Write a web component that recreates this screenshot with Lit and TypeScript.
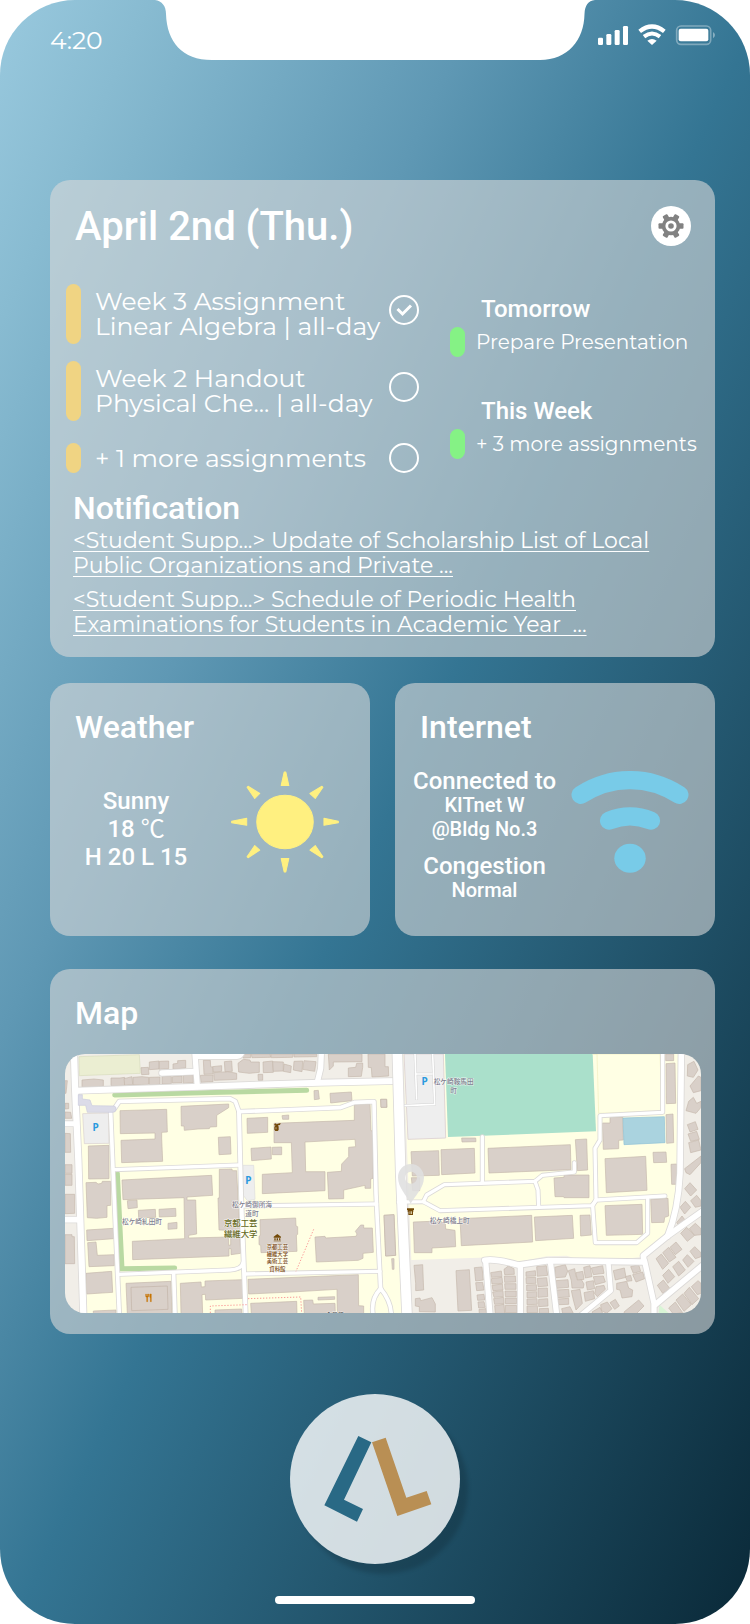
import { LitElement, html, svg, css } from "lit";
import { customElement, property, state } from "lit/decorators.js";

interface Road {
  d: string;
  w: number;
}

interface Label {
  x: number;
  y: number;
  size: number;
  fill: string;
  text: string;
}

const WEST_ROADS: Road[] = [
  { d: "M102 282L105 380L115 600L130 1062", w: 19 },
  { d: "M108 392L480 380L840 368L1070 363", w: 18 },
  { d: "M465 282L472 380", w: 16 },
  { d: "M472 287H590Q600 286 603 278", w: 20 },
  { d: "M366 339L465 335", w: 17 },
  { d: "M844 278L842 325L832 366", w: 16 },
  { d: "M70 491H108", w: 15 },
  { d: "M70 779H118", w: 17 },
  { d: "M222 448L238 424L570 416L586 424L597 455L900 443L945 427L1002 425L1008 700L1022 990", w: 11 },
  { d: "M212 458L222 700L238 1062", w: 11 },
  { d: "M222 629L600 615", w: 10 },
  { d: "M597 455L603 700L617 1062", w: 12 },
  { d: "M606 738L1010 732", w: 10 },
  { d: "M238 943L570 930Q605 928 609 908", w: 10 },
  { d: "M615 942L1020 934", w: 10 },
  { d: "M401 943L405 1062", w: 11 },
  { d: "M1022 986Q992 1016 999 1062", w: 11 },
  { d: "M1022 986Q1052 1022 1054 1062", w: 11 },
];

const EAST_ROADS: Road[] = [
  { d: "M52 278L62 640L81 1064", w: 29 },
  { d: "M55 726L130 725L140 705L193 674L465 664L487 646L583 636V608", w: 10 },
  { d: "M130 725L180 752L635 737L650 720L855 708", w: 10 },
  { d: "M307 530V668", w: 10 },
  { d: "M465 664L474 690L476 742", w: 10 },
  { d: "M848 278V457L660 467V540L645 565L648 718L638 738L646 848H770L803 820V716", w: 10 },
  { d: "M904 278L900 640Q895 750 863 828", w: 17 },
  { d: "M314 901Q345 895 415 915L505 902L792 906L790 887L865 826L970 752", w: 17 },
  { d: "M317 902L330 1064", w: 16 },
  { d: "M421 915V1064", w: 16 },
  { d: "M511 904L530 1064", w: 16 },
  { d: "M685 908L692 992L600 1068", w: 14 },
  { d: "M794 904L822 1030V1064", w: 16 },
  { d: "M826 1034L970 914", w: 17 },
];

const WEST_BUILDINGS = [
  "240,452 380,448 382,516 365,517 365,534 368,604 245,608 243,541 345,537 345,519 241,521",
  "423,439 566,432 566,443 530,466 530,500 510,501 508,506 474,507 433,511 432,498 424,498",
  "535,532 571,530 573,582 537,584",
  "621,475 683,472 683,517 622,520",
  "633,565 693,561 694,597 635,602",
  "697,562 725,561 725,584 697,584",
  "726,467 746,465 746,478 728,478",
  "702,490 943,481 943,434 990,432 993,512 999,513 999,655 992,657 992,685 975,685 975,676 911,690 911,716 866,717 862,637 904,634 905,612 926,590 926,562 947,560 945,538 795,546 797,635 855,635 855,692 667,701 667,643 757,638 754,548 702,548",
  "246,660 515,646 518,706 441,711 441,720 467,720 470,822 446,826 446,834 566,831 566,856 572,855 572,811 537,810 534,714 538,714 538,628 576,627 577,632 590,632 602,880 573,884 573,866 567,866 567,888 278,899 277,844 434,836 432,713 249,719",
  "262,722 291,720 292,743 264,746",
  "295,751 346,748 347,772 296,773",
  "357,748 407,745 408,769 358,771",
  "384,790 411,787 411,806 384,808",
  "145,558 207,556 207,656 146,657",
  "138,668 168,667 174,672 185,670 187,664 212,664 212,736 201,737 201,772 170,775 142,773",
  "140,810 220,805 221,836 141,842",
  "143,848 168,846 172,886 223,884 223,917 147,920",
  "138,940 215,934 218,997 140,1002",
  "160,1053 228,1050 228,1062 160,1062",
  "258,970 393,964 396,1062 262,1062",
  "421,970 483,966 484,981 495,980 495,963 607,959 609,1015 497,1020 496,1003 486,1004 488,1062 423,1062",
  "525,1050 605,1047 606,1062 525,1062",
  "624,958 955,944 956,1037 971,1038 971,1062 892,1062 891,988 755,996 626,1002",
  "632,1030 770,1024 771,1062 634,1062",
  "791,1021 818,1020 820,1032 885,1030 886,1062 793,1062",
  "834,1012 884,1010 884,1018 834,1020",
  "660,779 767,774 768,798 773,800 773,823 769,825 771,874 663,878 662,856 657,854 657,829 661,826",
  "825,831 855,829 857,834 948,829 951,822 946,814 962,795 971,795 971,804 997,804 1000,877 969,880 969,895 955,901 829,906",
  "1032,766 1062,764 1067,886 1037,888",
  "1055,896 1062,896 1062,928 1057,928",
  "822,392 835,391 838,417 823,419",
  "870,400 934,396 936,422 872,429",
  "1022,418 1040,418 1041,442 1023,442",
  "126,360 162,357 190,360 190,379 126,381",
  "213,354 240,354 254,352 254,376 213,377",
  "252,356 276,350 278,374 254,376",
  "279,352 306,350 326,352 326,373 279,374",
  "328,352 360,351 360,373 328,374",
  "366,350 394,349 394,371 366,372",
  "397,350 426,348 426,368 397,369",
  "430,347 460,345 460,368 430,370",
  "303,323 325,322 327,343 305,344",
  "328,306 357,303 357,327 328,329",
  "358,304 386,303 386,326 358,328",
  "399,312 413,310 413,302 437,301 437,324 399,327",
  "481,346 519,345 519,365 483,367",
  "490,301 511,301 512,320 520,322 519,342 492,343",
  "521,338 563,335 590,340 590,358 523,361",
  "518,320 545,317 545,334 520,336",
  "553,305 575,303 577,334 555,335",
  "594,310 610,298 630,300 632,306 658,306 658,337 628,340 596,336",
  "606,282 632,282 632,293 610,294",
  "634,282 690,282 692,292 636,293",
  "692,282 760,282 758,292 694,293",
  "762,282 830,282 830,290 762,291",
  "669,306 698,303 700,337 670,338",
  "698,305 730,306 730,333 700,334",
  "732,312 754,318 752,338 730,334",
  "654,343 668,343 668,361 655,361",
  "762,304 788,303 786,335 760,330",
  "792,302 828,305 824,334 788,328",
  "865,282 966,282 966,305 880,306 880,318 868,330",
  "925,324 947,322 950,310 968,309 968,322 964,349 925,350",
  "984,282 1035,282 1035,320 1045,320 1046,348 996,351 994,323 985,322",
  "75,362 82,362 78,400 75,400",
  "75,430 86,430 86,446 75,447",
  "75,456 92,457 95,475 75,475",
  "75,520 91,521 92,577 75,577",
  "75,614 96,614 96,640 75,640",
  "75,643 96,643 96,676 75,676",
  "75,703 104,703 104,760 75,761",
  "75,824 96,824 96,830 103,830 104,911 75,911",
];

const EAST_BUILDINGS = [
  "93,575 176,572 178,646 97,648",
  "183,569 283,565 285,639 185,644",
  "94,653 119,653 119,692 98,692",
  "245,534 287,534 288,545 246,546",
  "324,565 571,554 573,629 327,639",
  "586,539 620,537 623,630 592,632",
  "522,654 552,652 552,645 627,645 627,713 552,713 551,710 525,710",
  "667,489 690,489 690,472 728,471 730,540 716,541 716,566 670,568",
  "675,596 797,589 801,691 679,698",
  "675,737 786,733 788,823 679,826",
  "819,577 858,576 860,607 821,608",
  "857,282 881,282 881,302 857,302",
  "858,311 885,309 887,430 859,431",
  "858,464 879,462 881,548 860,550",
  "873,613 890,612 890,673 875,673",
  "812,718 864,715 866,768 854,772 852,787 815,788",
  "100,786 180,783 196,792 197,807 225,811 227,860 156,864 156,878 103,878",
  "240,776 455,766 458,846 244,857",
  "463,771 577,766 581,835 467,842",
  "600,766 630,765 634,825 602,828",
  "12,766 42,764 47,886 17,888",
  "2,418 20,418 20,442 3,442",
  "102,916 128,914 131,990 107,992 107,970",
  "228,932 268,929 275,1051 234,1053",
  "106,1016 120,1014 122,1022 156,1013 166,1032 166,1056 118,1055 118,1040 106,1038",
  "283,923 306,921 310,960 287,963",
  "287,968 308,967 312,990 290,992",
  "291,1005 312,1003 314,1020 293,1021",
  "294,1026 312,1025 316,1042 296,1044",
  "297,1048 318,1046 320,1062 298,1062",
  "332,938 364,933 366,950 334,952",
  "334,956 366,952 368,970 336,972",
  "336,976 367,972 369,990 339,992",
  "338,996 369,992 370,1010 342,1012",
  "341,1016 371,1012 372,1031 344,1033",
  "344,1037 372,1033 374,1060 346,1060",
  "372,928 385,918 402,926 403,943 374,944",
  "373,948 406,948 407,966 374,967",
  "374,971 408,971 408,988 375,988",
  "375,993 409,993 409,1010 376,1010",
  "376,1014 410,1014 410,1031 376,1031",
  "376,1036 410,1036 411,1058 376,1058",
  "438,936 466,932 467,948 438,949",
  "438,953 467,952 468,970 439,971",
  "440,975 469,974 470,991 440,992",
  "441,996 470,995 470,1012 441,1013",
  "441,1017 471,1016 472,1033 441,1034",
  "441,1038 472,1037 473,1058 441,1058",
  "470,920 499,917 503,946 472,949",
  "472,955 500,953 503,978 474,980",
  "474,985 502,984 503,1010 474,1012",
  "476,1018 503,1016 504,1038 476,1040",
  "478,1046 505,1045 506,1060 478,1060",
  "524,922 556,914 563,934 556,951 527,953",
  "528,962 564,959 566,982 530,985",
  "530,990 566,988 568,1011 532,1013",
  "534,1017 566,1015 566,1033 536,1034",
  "545,1046 570,1040 580,1060 548,1060",
  "565,932 584,926 588,950 600,952 612,972 610,984 576,984 574,962",
  "574,992 600,988 607,1030 588,1050 580,1020",
  "588,938 608,934 612,958 592,960",
  "611,922 630,917 636,950 616,954",
  "634,924 668,917 672,940 640,944",
  "640,950 670,948 676,966 646,974",
  "618,966 640,962 644,986 622,990",
  "648,980 672,976 676,988 652,1010 644,1000",
  "612,998 640,992 644,1016 616,1024",
  "700,932 733,924 738,952 706,960",
  "710,970 740,964 746,984 758,990 756,1010 726,1014 720,990 710,988",
  "752,920 776,914 782,934 760,940",
  "758,944 788,936 794,956 768,966",
  "736,950 752,946 756,962 742,964",
  "690,1028 706,1018 718,1038 704,1048",
  "662,1034 682,1026 696,1046 680,1060 664,1052",
  "636,1056 660,1042 668,1060 640,1062",
  "732,1056 776,1020 792,1038 768,1062 734,1062",
  "923,314 942,304 954,330 940,352 922,348",
  "930,378 955,348 963,352 963,392 940,398",
  "926,424 940,412 950,430 963,424 963,442 948,460 918,452",
  "922,494 946,485 954,508 930,516",
  "924,522 950,514 958,538 932,544",
  "926,548 956,540 963,570 932,578",
  "914,626 963,588 963,608 930,644 918,638",
  "914,686 930,668 950,690 932,708",
  "932,722 950,706 963,722 963,738 946,742",
  "900,742 916,724 932,742 914,762",
  "890,788 906,768 918,784 900,800",
  "902,820 920,802 944,826 922,844",
  "928,806 946,790 963,806 963,824 944,826",
  "828,896 844,882 866,910 848,928",
  "848,878 866,862 888,892 868,906",
  "870,862 888,846 906,868 886,884",
  "848,946 866,928 884,950 864,970",
  "878,920 896,904 916,930 896,948",
  "908,900 922,884 942,904 924,922",
  "930,874 944,860 963,878 963,890 946,896",
  "832,976 850,960 870,986 848,1000",
  "866,1044 886,1026 908,1058 880,1062",
  "888,1020 908,1002 934,1034 912,1054",
  "912,1000 928,982 956,1016 936,1034",
  "934,980 954,962 963,970 963,1000 952,1004",
];

const LABELS: Label[] = [
  { x: 306, y: 792, size: 20, fill: "#80808f", text: "松ケ崎糺田町" },
  { x: 636, y: 741, size: 20, fill: "#80808f", text: "松ケ崎御所海" },
  { x: 636, y: 769, size: 20, fill: "#80808f", text: "道町" },
  { x: 602, y: 798, size: 25, fill: "#666a1c", text: "京都工芸" },
  { x: 602, y: 831, size: 25, fill: "#666a1c", text: "繊維大学" },
  { x: 712, y: 866, size: 16, fill: "#7a4a12", text: "京都工芸" },
  { x: 712, y: 888, size: 16, fill: "#7a4a12", text: "繊維大学" },
  { x: 712, y: 910, size: 16, fill: "#7a4a12", text: "美術工芸" },
  { x: 712, y: 932, size: 16, fill: "#7a4a12", text: "資料館" },
  { x: 884, y: 1070, size: 18, fill: "#555555", text: "会見館" },
  { x: 1241, y: 373, size: 20, fill: "#80808f", text: "松ケ崎鞍馬田" },
  { x: 1241, y: 400, size: 20, fill: "#80808f", text: "町" },
  { x: 1229, y: 789, size: 20, fill: "#80808f", text: "松ケ崎橋上町" },
];

@customElement("campus-map")
export class CampusMap extends LitElement {
  static styles = css`
    :host {
      display: block;
      overflow: hidden;
      border-radius: 20px;
    }
    svg {
      display: block;
      width: 100%;
      height: auto;
    }
    .casing,
    .road {
      fill: none;
      stroke-linecap: round;
      stroke-linejoin: round;
    }
    .casing {
      stroke: #dcdad8;
    }
    .road {
      stroke: #ffffff;
    }
    .building {
      fill: #d9d0c9;
      stroke: #c6b8ac;
      stroke-width: 2;
    }
    .hedge {
      fill: none;
      stroke: #b9d9a2;
      stroke-width: 15;
      stroke-linecap: round;
    }
    .lane {
      fill: none;
      stroke: #d3d3d3;
      stroke-width: 8;
    }
    .lane-top {
      fill: none;
      stroke: #ffffff;
      stroke-width: 5;
    }
    .path {
      fill: none;
      stroke: #fa9a98;
      stroke-width: 3;
      stroke-dasharray: 4 5;
    }
    text {
      font-family: "Noto Sans CJK JP", sans-serif;
      text-anchor: middle;
      paint-order: stroke;
      stroke: rgba(255, 255, 255, 0.7);
      stroke-width: 3px;
    }
    .parking {
      font-family: "Noto Sans", sans-serif;
      font-weight: 700;
      font-size: 30px;
      fill: #2a9ade;
      stroke: none;
    }
  `;

  private roads(list: Road[]) {
    return svg`
      ${list.map((r) => svg`<path class="casing" d=${r.d} stroke-width=${r.w + 5} />`)}
      ${list.map((r) => svg`<path class="road" d=${r.d} stroke-width=${r.w} />`)}
    `;
  }

  private buildings(list: string[]) {
    return list.map((p) => svg`<polygon class="building" points=${p} />`);
  }

  render() {
    return html`
      <svg viewBox="75 282 1908 777" role="img" aria-label="Campus map">
        <rect x="75" y="282" width="1908" height="777" fill="#f1eee8" />
        <polygon points="112,392 1060,370 1090,1062 134,1062" fill="#ffffe4" />
        <polygon points="117,290 298,284 301,340 118,347" fill="#ebeed2" stroke="#d8dcbd" stroke-width="2" />
        <polygon points="128,461 205,459 207,550 133,551" fill="#eeeeee" stroke="#d9d0d0" stroke-width="2" />
        <polygon points="608,616 641,616 645,718 622,722 610,706" fill="#eeeeee" stroke="#dddddd" stroke-width="2" />
        <g transform="translate(1020 0)">
          <polygon
            points="70,282 896,282 900,640 862,828 790,890 750,895 580,893 560,887 500,889 415,905 340,892 94,900"
            fill="#ffffe4"
          />
          <polygon points="72,282 190,282 197,534 84,538" fill="#eeeeee" stroke="#e0d6d6" stroke-width="3" />
          <polygon points="195,282 638,282 648,514 204,531" fill="#aae0cb" />
          <polygon points="638,282 651,282 656,460 846,452 840,282" fill="#ffffe4" stroke="#f2efc0" stroke-width="2" />
          <path class="lane" d="M105 282L110 420M108 342H157M158 282L164 433L72 437" />
          <path class="lane-top" d="M105 282L110 419M108 342H157M158 282L164 433L72 437" />
          <polygon points="838,1034 866,1059 836,1059" fill="#d9f5d6" />
        </g>
        <path class="hedge" d="M224 405L480 398L800 391M232 640L246 926L404 924" />
        ${this.buildings(WEST_BUILDINGS)}
        <polygon points="273,982 382,978 384,1048 275,1052" fill="none" stroke="#c2b3a8" stroke-width="2" />
        ${this.roads(WEST_ROADS)}
        <path
          d="M115 404H127V417L150 420L156 437L222 438Q230 440 228 449Q226 457 218 457H142L137 436H115Z"
          fill="#dcdce8"
          stroke="#cacade"
          stroke-width="2"
        />
        <g transform="translate(1020 0)">
          ${this.buildings(EAST_BUILDINGS)}
          ${this.roads(EAST_ROADS)}
          <polygon points="729,474 853,470 855,548 732,554" fill="#aad3df" stroke="#8fc1d6" stroke-width="2" />
        </g>
        <path class="path" d="M821 808L768 934M511 1059V1038L622 1034M624 1016L782 1011L785 1059" />
        <path
          d="M701 830L712 822L723 830V833H701ZM703 835H707V841H703ZM710 835H714V841H710ZM717 835H721V841H717ZM701 842H723V844H701Z"
          fill="#734a08"
        />
        <path
          d="M703 492L708 490L709 493L722 489L720 495L714 496L716 500V510L713 513H706L703 509V500L707 497L703 496ZM707 502V508H709V502Z"
          fill="#734a08"
          fill-rule="evenodd"
        />
        <path
          d="M317 1002V1009Q317 1012 320 1012V1025H323V1012Q326 1012 326 1008V1002H324V1008H322V1002H321V1008H319V1002ZM329 1003Q328 1012 331 1014V1025H334V1002Q330 1001 329 1003Z"
          fill="#c77400"
          stroke="#c77400"
          stroke-width="1"
        />
        <path
          d="M1101 745H1122V750H1120V755H1119V765H1105V755H1103V750H1101ZM1109 754V762H1111V754ZM1114 754V762H1116V754Z"
          fill="#734a08"
          fill-rule="evenodd"
        />
        <path
          d="M1113 612C1090 612 1074 630 1074 652C1074 684 1100 706 1112 731C1126 706 1152 684 1152 652C1152 630 1135 612 1113 612ZM1113 635A18 18 0 1 1 1113 671A18 18 0 1 1 1113 635Z"
          fill="#dfdfdf"
          fill-opacity="0.88"
          fill-rule="evenodd"
        />
        <text class="parking" x="167" y="514">P</text>
        <text class="parking" x="625" y="672">P</text>
        <text class="parking" x="1154" y="374">P</text>
        ${LABELS.map((l) => svg`<text x=${l.x} y=${l.y} font-size=${l.size} fill=${l.fill}>${l.text}</text>`)}
      </svg>
    `;
  }
}

const body = css`
  .plain {
    font-family: "Montserrat", "Inter", sans-serif;
    font-weight: 400;
  }
`;

@customElement("task-row")
export class TaskRow extends LitElement {
  @property({ type: Array }) lines: string[] = [];
  @property({ type: Boolean }) done = false;

  static styles = [
    body,
    css`
      :host {
        display: block;
      }
      label {
        display: grid;
        grid-template-columns: 15px 1fr 30px;
        column-gap: 14px;
      }
      .bar {
        border-radius: 8px;
        background: #f0d483;
      }
      .text {
        align-self: center;
        min-width: 0;
        padding: 5px 0;
        font-size: 25px;
        line-height: 25px;
        white-space: nowrap;
      }
      .text.single {
        padding: 2px 0;
        line-height: 26px;
      }
      .line {
        display: block;
      }
      .check {
        display: grid;
        height: 30px;
        margin-top: 11px;
      }
      .single + .check {
        margin-top: 0;
      }
      input,
      svg {
        grid-area: 1 / 1;
        width: 30px;
        height: 30px;
        margin: 0;
      }
      input {
        box-sizing: border-box;
        appearance: none;
        border: 2px solid #ffffff;
        border-radius: 50%;
      }
      svg {
        display: none;
        pointer-events: none;
      }
      input:checked + svg {
        display: block;
      }
    `,
  ];

  render() {
    const single = this.lines.length === 1;
    return html`
      <label>
        <span class="bar"></span>
        <span class="text plain ${single ? "single" : ""}">
          ${this.lines.map((l) => html`<span class="line">${l}</span>`)}
        </span>
        <span class="check">
          <input type="checkbox" .checked=${this.done} />
          <svg viewBox="0 0 30 30">
            <path d="M8.500 14L13.500 19L22 10.500" fill="none" stroke="#ffffff" stroke-width="3" />
          </svg>
        </span>
      </label>
    `;
  }
}

@customElement("app-root")
export class AppRoot extends LitElement {
  @state() private tasks = [
    { lines: ["Week 3 Assignment", "Linear Algebra | all-day"], done: true },
    { lines: ["Week 2 Handout", "Physical Che... | all-day"], done: false },
    { lines: ["+ 1 more assignments"], done: false },
  ];

  private upcoming = [
    { when: "Tomorrow", what: "Prepare Presentation" },
    { when: "This Week", what: "+ 3 more assignments" },
  ];

  private notices = [
    ["<Student Supp...> Update of Scholarship List of Local", "Public Organizations and Private ..."],
    ["<Student Supp...> Schedule of Periodic Health", "Examinations for Students in Academic Year\u00a0 ..."],
  ];

  static styles = [
    body,
    css`
      :host {
        display: block;
        background: #ffffff;
        color: #ffffff;
        font-family: "Roboto", sans-serif;
        font-weight: 500;
      }
      .screen {
        box-sizing: border-box;
        min-height: 100vh;
        border-radius: 75px;
        overflow: hidden;
        background: linear-gradient(
          to bottom right,
          #99c9de 0%,
          #88bbd1 10%,
          #5f98b4 32%,
          #347593 51%,
          #0a2938 100%
        );
      }
      .status {
        display: grid;
        grid-template-columns: 1fr 440px 1fr;
      }
      .time {
        padding: 25px 0 0 50px;
        font-size: 25px;
        line-height: 30px;
      }
      .notch {
        display: block;
        width: 440px;
        height: 60px;
      }
      .signals {
        display: block;
        justify-self: end;
        width: 117px;
        height: 22px;
        margin: 24px 35px 0 0;
      }
      main {
        display: grid;
        grid-template-columns: 1fr 1fr;
        column-gap: 25px;
        padding: 120px 35px 0 50px;
      }
      .card {
        border-radius: 20px;
        background: rgba(217, 217, 217, 0.6);
      }
      .wide {
        grid-column: 1 / -1;
      }
      h1,
      h2,
      h3,
      p,
      ul {
        margin: 0;
        padding: 0;
        font-weight: 500;
      }
      ul {
        list-style: none;
      }
      h1 {
        padding-top: 2px;
        font-size: 40px;
        line-height: 46px;
      }
      h2 {
        font-size: 32px;
        line-height: 38px;
      }
      h3 {
        font-size: 24px;
        line-height: 28px;
      }
      .today {
        padding: 22px 24px 20px 16px;
        margin-bottom: 26px;
      }
      .today-head {
        display: flex;
        align-items: center;
        justify-content: space-between;
        padding-left: 9px;
        margin-bottom: 34px;
      }
      button {
        padding: 0;
        border: 0;
        cursor: pointer;
      }
      .gear {
        display: grid;
        place-items: center;
        width: 40px;
        height: 40px;
        border-radius: 50%;
        background: #ffffff;
      }
      .gear svg {
        width: 26px;
        height: 26px;
      }
      .agenda {
        display: flex;
        gap: 31px;
        margin-bottom: 16px;
      }
      .tasks {
        display: flex;
        flex-direction: column;
        flex: 0 0 353px;
        gap: 17px;
      }
      .tasks li:last-child {
        padding-top: 5px;
      }
      .upcoming {
        display: flex;
        flex-direction: column;
        gap: 40px;
        padding-top: 11px;
      }
      .upcoming h3 {
        padding-left: 31px;
        margin-bottom: 4px;
      }
      .event {
        display: flex;
        gap: 11px;
        font-size: 20px;
        line-height: 30px;
        white-space: nowrap;
      }
      .event-bar {
        width: 15px;
        border-radius: 8px;
        background: #85f285;
      }
      .notices {
        padding-left: 7px;
      }
      .notices h2 {
        margin-bottom: 1px;
      }
      .notices li + li {
        margin-top: 9px;
      }
      .notices a {
        display: block;
        color: inherit;
        font-size: 22px;
        line-height: 25px;
        white-space: nowrap;
        text-decoration: underline;
        text-decoration-thickness: 1px;
        text-underline-offset: 3px;
        text-decoration-skip-ink: none;
      }
      .small {
        min-height: 228px;
        padding-top: 25px;
        margin-bottom: 33px;
      }
      .small h2,
      .map h2 {
        padding-left: 25px;
      }
      .body {
        display: flex;
        align-items: flex-start;
        justify-content: space-between;
        margin-top: 23px;
        text-align: center;
      }
      .weather .body {
        padding: 0 31px 0 25px;
      }
      .internet .body {
        padding: 0 26px 0 18px;
      }
      .body svg {
        display: block;
        height: 102px;
        margin-top: 2px;
      }
      .forecast {
        width: 122px;
        padding-top: 18px;
        font-size: 24px;
        line-height: 28px;
      }
      .unit {
        font-family: "Noto Sans CJK JP", sans-serif;
        font-weight: 400;
        line-height: 1;
      }
      .forecast p {
        height: 28px;
      }
      .network {
        font-size: 20px;
        line-height: 24px;
      }
      .network h3 {
        line-height: 24px;
      }
      .network p + h3 {
        margin-top: 13px;
      }
      .map {
        padding-top: 25px;
      }
      .map campus-map {
        margin: 22px 14px 21px 15px;
      }
      footer {
        display: flex;
        flex-direction: column;
        align-items: center;
        padding: 60px 0 20px;
      }
      .launch {
        width: 170px;
        height: 170px;
        border-radius: 50%;
        background: rgba(255, 255, 255, 0.8);
        box-shadow: 8px 10px 4px rgba(0, 0, 0, 0.15);
      }
      .launch svg {
        display: block;
      }
      .home {
        width: 200px;
        height: 8px;
        margin-top: 32px;
        border-radius: 4px;
        background: #ffffff;
      }
    `,
  ];

  private gearIcon() {
    return svg`
      <svg viewBox="0 0 26 26">
        <g fill="#828282">
          ${[0, 60, 120].map((a) => svg`<rect x="0.500" y="10.300" width="25" height="5.400" rx="1" transform="rotate(${a} 13 13)" />`)}
          <circle cx="13" cy="13" r="9.200" />
        </g>
        <circle cx="13" cy="13" r="4.200" fill="none" stroke="#ffffff" stroke-width="2.800" />
      </svg>
    `;
  }

  private sunIcon() {
    return html`
      <svg width="108" viewBox="572 302 323 308" preserveAspectRatio="none" aria-hidden="true">
        <g fill="#fff080" stroke="#fff080" stroke-width="3" stroke-linejoin="round">
          <ellipse cx="733.500" cy="456" rx="84.500" ry="80.500" />
          <path d="M731 305H736L745 346H722Z" />
          <path d="M731 607H736L745 566H722Z" />
          <path d="M574 454V458L619 466V445Z" />
          <path d="M893 454V458L850 466V445Z" />
          <path d="M620 351L623 348L658 370L643 385Z" />
          <path d="M847 351L844 348L808 370L824 385Z" />
          <path d="M620 561L623 564L658 541L643 527Z" />
          <path d="M847 561L844 564L808 541L824 527Z" />
        </g>
      </svg>
    `;
  }

  private wifiIcon() {
    return html`
      <svg width="118" viewBox="575 302 353 308" preserveAspectRatio="none" aria-hidden="true">
        <g fill="none" stroke="#78cbe8" stroke-width="55" stroke-linecap="round">
          <path d="M604 374Q674 329 751.500 329.500Q829 329 899 374" />
          <path d="M689 452Q720 439 751.500 439Q783 439 814 452" />
        </g>
        <ellipse cx="751.500" cy="565.500" rx="47" ry="44" fill="#78cbe8" />
      </svg>
    `;
  }

  render() {
    return html`
      <div class="screen">
        <header class="status">
          <span class="time plain">4:20</span>
          <svg class="notch" viewBox="0 0 440 60" aria-hidden="true">
            <path
              d="M0 0C7 1 11 6 11 14C12 42 27 60 57 60H385C413 60 429 40 429.500 14C430 5 433 1 440 0Z"
              fill="#ffffff"
            />
          </svg>
          <svg class="signals" viewBox="39 42 351 66" aria-hidden="true">
            <g fill="#ffffff">
              <rect x="39" y="83" width="15" height="22" rx="4" />
              <rect x="64" y="72" width="15" height="33" rx="4" />
              <rect x="89" y="60" width="15" height="45" rx="4" />
              <rect x="114" y="48" width="15" height="57" rx="4" />
              <path d="M201 105L187 92Q201 82 215 92Z" />
              <rect x="281" y="56" width="89" height="38" rx="6" />
            </g>
            <path d="M164 64Q201 35 238 64" fill="none" stroke="#ffffff" stroke-width="13" />
            <path d="M177 80Q201 61 225 80" fill="none" stroke="#ffffff" stroke-width="12" />
            <rect x="275" y="48" width="102" height="55" rx="13" fill="none" stroke="#ffffff" stroke-opacity="0.35" stroke-width="5" />
            <path d="M384 66Q390 70 390 75Q390 81 384 85Z" fill="#ffffff" fill-opacity="0.4" />
          </svg>
        </header>

        <main>
          <section class="card wide today">
            <div class="today-head">
              <h1>April 2nd (Thu.)</h1>
              <button class="gear" aria-label="Settings">${this.gearIcon()}</button>
            </div>
            <div class="agenda">
              <ul class="tasks">
                ${this.tasks.map((t) => html`<li><task-row .lines=${t.lines} .done=${t.done}></task-row></li>`)}
              </ul>
              <div class="upcoming">
                ${this.upcoming.map(
                  (u) => html`
                    <div>
                      <h3>${u.when}</h3>
                      <p class="event plain"><span class="event-bar"></span>${u.what}</p>
                    </div>
                  `,
                )}
              </div>
            </div>
            <div class="notices">
              <h2>Notification</h2>
              <ul>
                ${this.notices.map(
                  ([first, second]) => html`<li><a class="plain" href="#">${first}<br />${second}</a></li>`,
                )}
              </ul>
            </div>
          </section>

          <section class="card small weather">
            <h2>Weather</h2>
            <div class="body">
              <div class="forecast">
                <p>Sunny</p>
                <p>18 <span class="unit">℃</span></p>
                <p>H 20 L 15</p>
              </div>
              ${this.sunIcon()}
            </div>
          </section>

          <section class="card small internet">
            <h2>Internet</h2>
            <div class="body">
              <div class="network">
                <h3>Connected to</h3>
                <p>KITnet W</p>
                <p>@Bldg No.3</p>
                <h3>Congestion</h3>
                <p>Normal</p>
              </div>
              ${this.wifiIcon()}
            </div>
          </section>

          <section class="card wide map">
            <h2>Map</h2>
            <campus-map></campus-map>
          </section>
        </main>

        <footer>
          <button class="launch" aria-label="Open menu">
            <svg viewBox="60 72 510 510">
              <polygon points="265,198 304,217 222,389 279,417 261,455 163,406" fill="#296985" />
              <polygon points="306,217 347,203 409,383 470,363 484,403 382,438" fill="#b98f54" />
            </svg>
          </button>
          <div class="home"></div>
        </footer>
      </div>
    `;
  }
}
